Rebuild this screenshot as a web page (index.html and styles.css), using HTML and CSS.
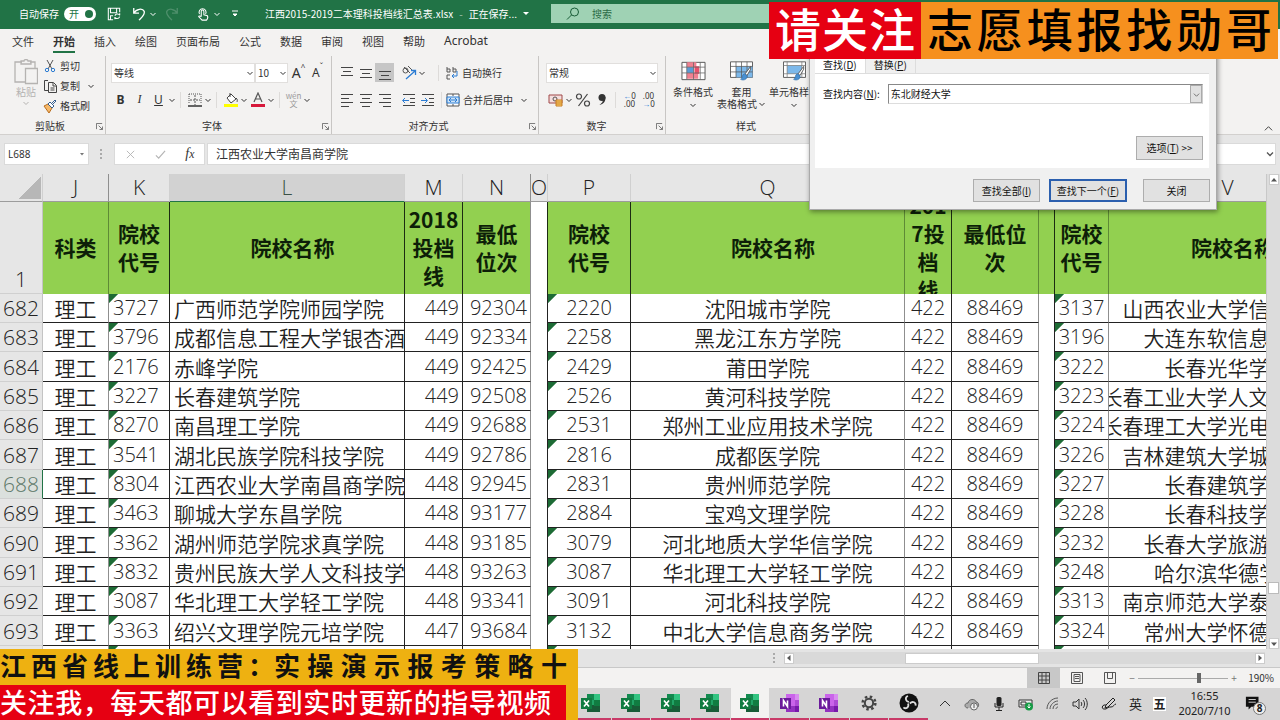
FILE: index.html
```html
<!DOCTYPE html>
<html lang="zh-CN">
<head>
<meta charset="utf-8">
<meta name="viewport" content="width=device-width, initial-scale=1">
<title>江西2015-2019二本理科投档线汇总表.xlsx</title>
<link rel="stylesheet" href="styles.css">
</head>
<body>
<svg class="sprite" aria-hidden="true">
  <symbol id="caret" viewBox="0 0 8 8"><path d="M1.5 3 4 5.5 6.5 3" fill="none" stroke="currentColor"/></symbol>
  <symbol id="launch" viewBox="0 0 8 8"><path d="M.5 7V.5H7M3 3l4 4M7.500 4v3.500H4" fill="none" stroke="currentColor"/></symbol>
  <symbol id="excel" viewBox="0 0 20 20"><path d="M6 1h13v18H6z" fill="#21a366"/><path d="M6 1h7v6H6z" fill="#138a50"/><path d="M13 1h6v6h-6z" fill="#33c481"/><path d="M6 12h13v7H6z" fill="#185c37"/><path d="M13 7h6v6h-6z" fill="#107c41"/><path d="M0 5h11v11H0z" fill="#107c41"/><path d="m3 7.500 5 6M8 7.500l-5 6" stroke="#fff" stroke-width="1.700"/></symbol>
  <symbol id="onenote" viewBox="0 0 20 20"><path d="M6 1h13v18H6z" fill="#ca64ea"/><path d="M15 1h4v6h-4z" fill="#d98cf0"/><path d="M15 7h4v6h-4z" fill="#ae4bd5"/><path d="M15 13h4v6h-4z" fill="#7719aa"/><path d="M6 13h9v6H6z" fill="#9332bf"/><path d="M0 5h11v11H0z" fill="#6b1a9b"/><path d="M3.500 13.500v-6l4 6v-6" fill="none" stroke="#fff" stroke-width="1.600"/></symbol>
  <symbol id="brush" viewBox="0 0 12 18"><path d="M11 1 5 9l2 2 4-7z" fill="#fff" stroke="#555"/><path d="M4 9c-3 1-1 5-4 6 3 2 8 0 7-4z" fill="#4a90d0" stroke="#2d6fae" stroke-width=".7"/></symbol>
</svg>

<div class="app">
  <header class="titlebar">
    <label class="autosave">自动保存 <input type="checkbox" checked><span class="switch">开<i></i></span></label>
    <button class="qa save" aria-label="保存"><svg viewBox="0 0 16 16"><path d="M7 14.500H1.500v-13h13V6M4 1.500v5h7v-5M4 14v-4h3M9 10c1-3 5-2 5.500-.5V7M14.500 11c-1 3-5 2.500-5.500.5V14" fill="none" stroke="#fff" stroke-width="1.200"/></svg></button>
    <button class="qa undo" aria-label="撤销"><svg viewBox="0 0 16 16"><path d="M2 1v6h6M2 7c3-5 10-6 12-2 1 4-3 7-6 10" fill="none" stroke="#fff" stroke-width="1.500"/></svg></button>
    <svg class="car"><use href="#caret"/></svg>
    <button class="qa redo" aria-label="恢复"><svg viewBox="0 0 16 16"><path d="M14 1v6H8M14 7C11 2 4 1 2 5c-1 4 3 7 6 10" fill="none" stroke="#fff" stroke-width="1.500"/></svg></button>
    <button class="qa touch" aria-label="触摸/鼠标模式"><svg viewBox="0 0 16 16"><path d="M4 8a4 4 0 1 1 7 0M6 11V5c0-2 3-2 3 0v4l4 1c1 2 0 4-1 5H7l-4-4c0-1 2-1 3 0" fill="none" stroke="#fff" stroke-width="1.200"/></svg></button>
    <svg class="car"><use href="#caret"/></svg>
    <button class="qa custom" aria-label="自定义"><svg viewBox="0 0 8 8"><path d="M1 1h6M2 4l2 2 2-2z" fill="#fff" stroke="#fff"/></svg></button>
    <h1 class="doc">江西2015-2019二本理科投档线汇总表.xlsx<span>-</span>正在保存...</h1>
    <svg class="tri" viewBox="0 0 8 8"><path d="M1 2h6L4 5z" fill="#fff"/></svg>
    <label class="search"><svg viewBox="0 0 14 14"><circle cx="8.500" cy="5" r="4" fill="none" stroke="#185c37"/><path d="M5.500 8 1 12.500" stroke="#185c37"/></svg><input type="search" placeholder="搜索" aria-label="搜索"></label>
  </header>

  <nav class="tabs">
    <a href="#">文件</a><a href="#" class="on">开始</a><a href="#">插入</a><a href="#">绘图</a><a href="#">页面布局</a><a href="#">公式</a><a href="#">数据</a><a href="#">审阅</a><a href="#">视图</a><a href="#">帮助</a><a href="#" class="latin">Acrobat</a>
  </nav>

  <section class="ribbon">
    <div class="group g-clip">
      <div class="clip">
        <button class="paste"><svg viewBox="0 0 24 26"><path d="M8 3H1v20h10M16 3h5v6M7 5V2h3c0-2 4-2 4 0h3v3zM11.500 9.500h12v15h-12z" fill="none" stroke="#b5b3b1" stroke-width="1.300"/></svg><span>粘贴</span><svg class="car"><use href="#caret"/></svg></button>
        <div class="stack">
          <button class="cmd"><svg viewBox="0 0 14 14"><path d="m4 1 5 9M10 1 5 10" stroke="#555" fill="none"/><circle cx="4" cy="11" r="1.700" fill="none" stroke="#2b7cd3"/><circle cx="10" cy="11" r="1.700" fill="none" stroke="#2b7cd3"/></svg>剪切</button>
          <button class="cmd"><svg viewBox="0 0 14 14"><path d="M5 1.500H1.500v10H5M5.500 3.500h5l3 3v7h-8zM10 4v3h3M7.500 9h4M7.500 11h4" fill="none" stroke="#444"/></svg>复制<svg class="car"><use href="#caret"/></svg></button>
          <button class="cmd"><svg viewBox="0 0 14 14"><path d="m1 7 4-2 4 4-3 5z" fill="#f5b869" stroke="#b86e20"/><path d="m5 5 2-2 4 4-2 2zM9 4l3-3 1 1-3 3" fill="#fff" stroke="#355e8f"/></svg>格式刷</button>
        </div>
      </div>
      <footer><span>剪贴板</span><svg class="launch"><use href="#launch"/></svg></footer>
    </div>

    <div class="group g-font">
      <div class="line">
        <span class="sel w-font"><select aria-label="字体"><option>等线</option></select><svg class="car"><use href="#caret"/></svg></span>
        <span class="sel w-size"><select aria-label="字号"><option>10</option></select><svg class="car"><use href="#caret"/></svg></span>
        <button class="ic big" aria-label="增大字号">A<sup>^</sup></button><button class="ic mid" aria-label="减小字号">A<sup>ˇ</sup></button>
      </div>
      <div class="line">
        <button class="ic"><b>B</b></button><button class="ic"><i>I</i></button><button class="ic"><u>U</u></button><svg class="car"><use href="#caret"/></svg>
        <i class="sep"></i>
        <button class="ic" aria-label="边框"><svg viewBox="0 0 16 16"><path d="M2 2h12v10M2 2v10" fill="none" stroke="#555" stroke-dasharray="1 1"/><path d="M8 3v10M3 8h10" stroke="#555" stroke-dasharray="2 1"/><path d="M1 14h14" stroke="#333" stroke-width="1.500"/></svg></button><svg class="car"><use href="#caret"/></svg>
        <i class="sep"></i>
        <button class="ic" aria-label="填充颜色"><svg viewBox="0 0 16 16"><path d="m4 6 4-4 5 5-5 4zM7 1v4M13 6c2 1 1 4 1 4" fill="#fff" stroke="#444"/><path d="M1 12h14v3H1z" fill="#ff0"/></svg></button><svg class="car"><use href="#caret"/></svg>
        <button class="ic" aria-label="字体颜色"><svg viewBox="0 0 16 16"><path d="m4 10 4-9 4 9M5.500 7h5" fill="none" stroke="#555" stroke-width="1.200"/><path d="M1 12h14v3H1z" fill="#d7193b"/></svg></button><svg class="car"><use href="#caret"/></svg>
        <i class="sep"></i>
        <button class="ic wen">wén<br>文</button><svg class="car"><use href="#caret"/></svg>
      </div>
      <footer><span>字体</span><svg class="launch"><use href="#launch"/></svg></footer>
    </div>

    <div class="group g-align">
      <div class="line">
        <button class="ic" aria-label="顶端对齐"><svg viewBox="0 0 16 16"><path d="M2 2.500h12M4 6.500h8M2 10.500h12" stroke="#444"/></svg></button>
        <button class="ic" aria-label="垂直居中"><svg viewBox="0 0 16 16"><path d="M2 4.500h12M4 8.500h8M2 12.500h12" stroke="#444"/></svg></button>
        <button class="ic on" aria-label="底端对齐"><svg viewBox="0 0 16 16"><path d="M2 6.500h12M4 10.500h8M2 14.500h12" stroke="#444"/></svg></button>
        <i class="sep off"></i>
        <button class="ic" aria-label="方向"><svg viewBox="0 0 16 16"><circle cx="4.500" cy="5.500" r="2.500" fill="none" stroke="#555"/><path d="m3 2 6 6M7 1l4 4" stroke="#555"/><path d="m5 14 9-8M10 5.500h4.500V10" fill="none" stroke="#2b7cd3" stroke-width="1.300"/></svg></button><svg class="car"><use href="#caret"/></svg>
        <i class="sep far"></i>
        <button class="cmd"><svg viewBox="0 0 14 14"><path d="M2 1v5h3V3H2M8 1v5h3V3H8M5 9H2v4h3" fill="none" stroke="#555"/><path d="M12 5v5H7M9 8l-2 2 2 2" fill="none" stroke="#2b7cd3"/></svg>自动换行</button>
      </div>
      <div class="line">
        <button class="ic" aria-label="左对齐"><svg viewBox="0 0 16 16"><path d="M2 2.500h12M2 6.500h8M2 10.500h12M2 14.500h8" stroke="#444"/></svg></button>
        <button class="ic" aria-label="居中"><svg viewBox="0 0 16 16"><path d="M2 2.500h12M4 6.500h8M2 10.500h12M4 14.500h8" stroke="#444"/></svg></button>
        <button class="ic" aria-label="右对齐"><svg viewBox="0 0 16 16"><path d="M2 2.500h12M6 6.500h8M2 10.500h12M6 14.500h8" stroke="#444"/></svg></button>
        <i class="sep off"></i>
        <button class="ic" aria-label="减少缩进"><svg viewBox="0 0 16 16"><path d="M2 2.500h12M9 6.500h5M9 10.500h5M2 13.500h12" stroke="#444"/><path d="M8 8.500H2M4 6 1.500 8.500 4 11" fill="none" stroke="#2b7cd3"/></svg></button>
        <button class="ic" aria-label="增加缩进"><svg viewBox="0 0 16 16"><path d="M2 2.500h12M9 6.500h5M9 10.500h5M2 13.500h12" stroke="#444"/><path d="M1 8.500h6M5 6l2.500 2.500L5 11" fill="none" stroke="#2b7cd3"/></svg></button>
        <i class="sep"></i>
        <button class="cmd"><svg viewBox="0 0 14 14"><path d="M1 1h12v12H1zM7 1v2M7 11v2" fill="#fff" stroke="#555"/><path d="M1 4h12v6H1z" fill="#cfe4f7" stroke="#2b7cd3"/><path d="M3 7h8M5 5 3 7l2 2M9 5l2 2-2 2" fill="none" stroke="#2b7cd3"/></svg>合并后居中<svg class="car"><use href="#caret"/></svg></button>
      </div>
      <footer><span>对齐方式</span><svg class="launch"><use href="#launch"/></svg></footer>
    </div>

    <div class="group g-num">
      <div class="line">
        <span class="sel w-num"><select aria-label="数字格式"><option>常规</option></select><svg class="car"><use href="#caret"/></svg></span>
      </div>
      <div class="line">
        <button class="ic" aria-label="会计数字格式"><svg viewBox="0 0 16 16"><path d="M1 3h13v8H1z" fill="#f4dede" stroke="#a04848"/><circle cx="7" cy="7" r="2" fill="none" stroke="#555"/><path d="M8 8h6v6H8z" fill="#ffd56a" stroke="#c67b22"/><path d="M8 10h6M8 12h6" stroke="#c67b22"/></svg></button><svg class="car"><use href="#caret"/></svg>
        <button class="ic pct" aria-label="百分比"><svg viewBox="0 0 16 16"><circle cx="4" cy="4.500" r="2.500" fill="none" stroke="#444" stroke-width="1.200"/><circle cx="12" cy="11.500" r="2.500" fill="none" stroke="#444" stroke-width="1.200"/><path d="M12.500 2 3.500 14" stroke="#444" stroke-width="1.200"/></svg></button>
        <button class="ic" aria-label="千位分隔"><svg viewBox="0 0 16 16"><circle cx="8" cy="5.500" r="3.500" fill="#333"/><path d="M11.500 5c0 5-2 7-6 8 2-2 4-3 3-6z" fill="#333"/></svg></button>
        <i class="sep"></i>
        <button class="ic dec" aria-label="增加小数位数"><span><em>←</em>0</span><span>.00</span></button>
        <button class="ic dec" aria-label="减少小数位数"><span>.00</span><span><em>→</em>0</span></button>
      </div>
      <footer><span>数字</span><svg class="launch"><use href="#launch"/></svg></footer>
    </div>

    <div class="group g-style">
      <div class="tall">
        <button class="large"><svg viewBox="0 0 26 22"><path d="M1 2h24v18H1z" fill="#fff" stroke="#555"/><path d="M6 2h10v5H6zM6 13h12v6H6z" fill="#f08090"/><path d="M6 7h7v6H6z" fill="#5b9bd5"/><path d="M14 6h5v8h-5z" fill="#e8506a"/><path d="M1 7h24M1 13h24M6 2v18M13 2v18M20 2v18" stroke="#666" stroke-width=".8"/></svg><span>条件格式</span><svg class="car"><use href="#caret"/></svg></button>
        <button class="large"><svg viewBox="0 0 26 24"><path d="M1 2h24v17H1z" fill="#fff" stroke="#555"/><path d="M7 7h18v12H7z" fill="#7cb8ea"/><path d="M1 7h24M1 13h24M7 2v17M13 2v17M19 2v17" stroke="#555" stroke-width=".8"/><use href="#brush" x="11" y="6" width="14" height="18"/></svg><span>套用</span><span class="two">表格格式<svg class="car"><use href="#caret"/></svg></span></button>
        <button class="large"><svg viewBox="0 0 26 24"><path d="M1 2h24v17H1z" fill="#fff" stroke="#555"/><path d="M5 6h16v9H5z" fill="#7cb8ea"/><path d="M1 6h24M5 2v17M21 2v17M1 15h24" stroke="#777" stroke-width=".8"/><use href="#brush" x="11" y="6" width="14" height="18"/></svg><span>单元格样式</span><svg class="car"><use href="#caret"/></svg></button>
      </div>
      <footer><span>样式</span></footer>
    </div>
    <button class="collapse" aria-label="折叠功能区"><svg viewBox="0 0 10 10"><path d="m1 7 4-4 4 4" fill="none" stroke="#333"/></svg></button>
  </section>

  <section class="formula">
    <div class="namebox"><input value="L688" aria-label="名称框"><svg viewBox="0 0 8 8"><path d="M2 3h4L4 5.500z" fill="#777"/></svg></div>
    <i class="dots"></i>
    <div class="fx">
      <button aria-label="取消"><svg viewBox="0 0 12 12"><path d="m2 2 8 8M10 2l-8 8" stroke="#b5b5b5"/></svg></button>
      <button aria-label="输入"><svg viewBox="0 0 12 12"><path d="m1 7 3 3 7-8" fill="none" stroke="#b5b5b5" stroke-width="1.300"/></svg></button>
      <button class="fn" aria-label="插入函数">f<small>x</small></button>
    </div>
    <div class="content"><input value="江西农业大学南昌商学院" aria-label="编辑栏"><svg viewBox="0 0 8 8"><path d="M1 2.500 4 5.500l3-3" fill="none" stroke="#555" stroke-width="1.300"/></svg></div>
  </section>

  <main class="book">
    <div class="sheet">
      <table>
        <colgroup><col class="c0"><col class="cj"><col class="ck"><col class="cl"><col class="cm"><col class="cn"><col class="co"><col class="cp"><col class="cq"><col class="cr"><col class="cs"><col class="ct"><col class="cu"><col class="cv"></colgroup>
        <thead>
          <tr class="letters"><th class="corner"></th><th>J</th><th>K</th><th class="cur">L</th><th>M</th><th>N</th><th>O</th><th>P</th><th>Q</th><th>R</th><th>S</th><th>T</th><th>U</th><th>V</th></tr>
          <tr class="heads"><th>1</th><th><div>科类</div></th><th><div>院校代号</div></th><th><div class="name">院校名称</div></th><th><div>2018投档线</div></th><th><div>最低位次</div></th><th></th><th><div class="inset">院校代号</div></th><th><div class="name">院校名称</div></th><th><div>2017投档线</div></th><th><div>最低位次</div></th><th></th><th><div>院校代号</div></th><th><div class="name">院校名称</div></th></tr>
        </thead>
        <tbody>
          <tr><th>682</th><td>理工</td><td>3727</td><td>广西师范学院师园学院</td><td>449</td><td>92304</td><td></td><td>2220</td><td>沈阳城市学院</td><td>422</td><td>88469</td><td></td><td>3137</td><td><div>山西农业大学信息学院</div></td></tr>
          <tr><th>683</th><td>理工</td><td>3796</td><td>成都信息工程大学银杏酒店</td><td>449</td><td>92334</td><td></td><td>2258</td><td>黑龙江东方学院</td><td>422</td><td>88469</td><td></td><td>3196</td><td><div>大连东软信息学院</div></td></tr>
          <tr><th>684</th><td>理工</td><td>2176</td><td>赤峰学院</td><td>449</td><td>92425</td><td></td><td>2429</td><td>莆田学院</td><td>422</td><td>88469</td><td></td><td>3222</td><td><div>长春光华学院</div></td></tr>
          <tr><th>685</th><td>理工</td><td>3227</td><td>长春建筑学院</td><td>449</td><td>92508</td><td></td><td>2526</td><td>黄河科技学院</td><td>422</td><td>88469</td><td></td><td>3223</td><td><div>长春工业大学人文信息学院</div></td></tr>
          <tr><th>686</th><td>理工</td><td>8270</td><td>南昌理工学院</td><td>449</td><td>92688</td><td></td><td>2531</td><td>郑州工业应用技术学院</td><td>422</td><td>88469</td><td></td><td>3224</td><td><div>长春理工大学光电信息学院</div></td></tr>
          <tr><th>687</th><td>理工</td><td>3541</td><td>湖北民族学院科技学院</td><td>449</td><td>92786</td><td></td><td>2816</td><td>成都医学院</td><td>422</td><td>88469</td><td></td><td>3226</td><td><div>吉林建筑大学城建学院</div></td></tr>
          <tr class="cur"><th>688</th><td>理工</td><td>8304</td><td>江西农业大学南昌商学院</td><td>448</td><td>92945</td><td></td><td>2831</td><td>贵州师范学院</td><td>422</td><td>88469</td><td></td><td>3227</td><td><div>长春建筑学院</div></td></tr>
          <tr><th>689</th><td>理工</td><td>3463</td><td>聊城大学东昌学院</td><td>448</td><td>93177</td><td></td><td>2884</td><td>宝鸡文理学院</td><td>422</td><td>88469</td><td></td><td>3228</td><td><div>长春科技学院</div></td></tr>
          <tr><th>690</th><td>理工</td><td>3362</td><td>湖州师范学院求真学院</td><td>448</td><td>93185</td><td></td><td>3079</td><td>河北地质大学华信学院</td><td>422</td><td>88469</td><td></td><td>3232</td><td><div>长春大学旅游学院</div></td></tr>
          <tr><th>691</th><td>理工</td><td>3832</td><td>贵州民族大学人文科技学院</td><td>448</td><td>93263</td><td></td><td>3087</td><td>华北理工大学轻工学院</td><td>422</td><td>88469</td><td></td><td>3248</td><td><div>哈尔滨华德学院</div></td></tr>
          <tr><th>692</th><td>理工</td><td>3087</td><td>华北理工大学轻工学院</td><td>448</td><td>93341</td><td></td><td>3091</td><td>河北科技学院</td><td>422</td><td>88469</td><td></td><td>3313</td><td><div>南京师范大学泰州学院</div></td></tr>
          <tr><th>693</th><td>理工</td><td>3363</td><td>绍兴文理学院元培学院</td><td>447</td><td>93684</td><td></td><td>3132</td><td>中北大学信息商务学院</td><td>422</td><td>88469</td><td></td><td>3324</td><td><div>常州大学怀德学院</div></td></tr>
          <tr><th></th><td></td><td></td><td></td><td></td><td></td><td></td><td></td><td></td><td></td><td></td><td></td><td></td><td></td></tr>
        </tbody>
      </table>
    </div>
    <div class="vscroll"><button aria-label="向上滚动"><svg viewBox="0 0 8 8"><path d="M1 5.500h6L4 2z" fill="#555"/></svg></button><i></i><button aria-label="向下滚动"><svg viewBox="0 0 8 8"><path d="M1 2.500h6L4 6z" fill="#555"/></svg></button></div>
  </main>

  <div class="hbar">
    <i class="dots"></i>
    <div class="hscroll"><button aria-label="向左滚动"><svg viewBox="0 0 8 8"><path d="M5.500 1v6L2 4z" fill="#555"/></svg></button><i></i><button aria-label="向右滚动"><svg viewBox="0 0 8 8"><path d="M2.500 1v6L6 4z" fill="#555"/></svg></button></div>
  </div>

  <div class="status">
    <button class="view on" aria-label="普通"><svg viewBox="0 0 12 12"><path d="M.5.500h11v11H.5zM.5 4h11M.5 8h11M4 .5v11M8 .5v11" fill="none" stroke="#444"/></svg></button>
    <button class="view" aria-label="页面布局"><svg viewBox="0 0 12 12"><path d="M.5.500h11v11H.5zM3 2.500h6v7H3zM4 4.500h4M4 6.500h4" fill="none" stroke="#555"/></svg></button>
    <button class="view" aria-label="分页预览"><svg viewBox="0 0 12 12"><path d="M.5.500h11v11H.5zM3.500.500v6h5v-6" fill="none" stroke="#555"/></svg></button>
    <div class="zoom"><button aria-label="缩小">−</button><input type="range" min="0" max="100" value="68" aria-label="缩放"><button aria-label="放大">+</button></div>
    <span class="pct-text">190%</span>
  </div>

  <footer class="taskbar">
    <div class="apps">
      <button aria-label="Excel"><svg><use href="#excel"/></svg></button>
      <button aria-label="Excel"><svg><use href="#excel"/></svg></button>
      <button aria-label="Excel"><svg><use href="#excel"/></svg></button>
      <button aria-label="Excel"><svg><use href="#excel"/></svg></button>
      <button class="on" aria-label="Excel"><svg><use href="#excel"/></svg></button>
      <button aria-label="OneNote"><svg><use href="#onenote"/></svg></button>
      <button aria-label="OneNote"><svg><use href="#onenote"/></svg></button>
      <button aria-label="设置"><svg viewBox="-2 -2 24 24"><circle cx="10" cy="10" r="7.640" fill="none" stroke="#444" stroke-width="3" stroke-dasharray="3 3"/><circle cx="10" cy="10" r="5" fill="none" stroke="#444" stroke-width="2.400"/></svg></button>
      <button aria-label="OBS"><svg viewBox="0 0 20 20"><circle cx="10" cy="10" r="9.500" fill="#111"/><g fill="none" stroke="#ddd" stroke-width="1.800"><path d="M10 9C6 8 6 4 9 3"/><path d="M10 9C6 8 6 4 9 3" transform="rotate(120 10 10)"/><path d="M10 9C6 8 6 4 9 3" transform="rotate(240 10 10)"/></g></svg></button>
    </div>
    <div class="tray">
      <svg viewBox="0 0 16 16"><path d="m3 10 5-5 5 5" fill="none" stroke="#333"/></svg>
      <svg viewBox="0 0 16 16"><path d="M4 12c-4 0-4-5 0-5 1-5 8-4 8-1 3 0 3 4 2 5" fill="#aaa" stroke="#666"/><circle cx="10" cy="10.500" r="3.500" fill="#eee" stroke="#666"/><path d="M10 8v4" stroke="#555"/></svg>
      <svg viewBox="0 0 16 16"><rect x="5.500" y="1" width="5" height="9" rx="1.500" fill="#222"/><path d="M4 7v4h8V7M8 11v4M5 14.500h6" fill="none" stroke="#222"/></svg>
      <svg viewBox="0 0 16 16"><path d="M1 4h13v7H1zM3 6h5v3H3z" fill="#eee" stroke="#333"/><circle cx="11" cy="10.500" r="4" fill="#169b45"/><path d="M11 8v4M9.500 10.500 11 12l1.500-1.500" fill="none" stroke="#fff"/></svg>
      <svg viewBox="0 0 16 16"><path d="M2 13C2 7 7 2 13 2M5 13c0-4 4-8 8-8M8 13c0-3 2-5 5-5M11 13c0-1 1-2 2-2" fill="none" stroke="#555"/></svg>
      <svg viewBox="0 0 16 16"><path d="M1 6h3l3-3v10l-3-3H1zM9 6c1 1 1 3 0 4M11 4c2 2 2 6 0 8M13 2c3 3 3 9 0 12" fill="none" stroke="#333"/></svg>
      <svg class="pen" viewBox="0 0 16 16"><path d="m5 9 7-7 2 2-7 7-3 1zM5 9c-4-1-5 4-2 4 3 1 4-3 7-2 3 0 3-3 5-3" fill="none" stroke="#222"/></svg>
      <span class="ime">英</span>
      <span class="ime box">五</span>
    </div>
    <time class="clock">16:55<br>2020/7/10</time>
    <button class="notice" aria-label="通知"><svg viewBox="0 0 20 20"><path d="M1 2h14v11H7l-3 3v-3H1z" fill="#111"/><path d="M4 5h8M4 8h8" stroke="#ddd"/></svg><b>8</b></button>
  </footer>
</div>

<form class="find" onsubmit="return false">
  <div class="find-tabs"><button type="button" class="on">查找(<u>D</u>)</button><button type="button">替换(<u>P</u>)</button></div>
  <div class="panel">
    <div class="field"><label for="what">查找内容(<u>N</u>):</label><span class="combo"><input id="what" value="东北财经大学"><button type="button" aria-label="展开"><svg viewBox="0 0 8 8"><path d="M1 3 4 6l3-3" fill="none" stroke="#666"/></svg></button></span></div>
    <button type="button" class="btn opt">选项(<u>T</u>) &gt;&gt;</button>
  </div>
  <div class="actions"><button type="button" class="btn">查找全部(<u>I</u>)</button><button class="btn main">查找下一个(<u>F</u>)</button><button type="button" class="btn close">关闭</button></div>
</form>

<div class="promo top"><span class="red">请关注</span><span class="orange">志愿填报找勋哥</span></div>
<div class="promo bottom"><p class="yellow"><span>江西省线上训练营：</span><span>实操演示报考策略十</span></p><p class="red">关注我，每天都可以看到实时更新的指导视频</p></div>
</body>
</html>
```

FILE: styles.css
```css
* { box-sizing: border-box; }
body { margin: 0; background: #e6e6e6; color: #333; font: 10px/16px "Noto Sans CJK SC", sans-serif; position: relative; overflow: hidden; }
button, input, select { font: inherit; color: inherit; border: 0; padding: 0; margin: 0; background: none; border-radius: 0; }
svg { display: block; flex: none; }
i, em { font-style: normal; }
.sprite { position: absolute; width: 0; height: 0; }
.app { display: flex; flex-direction: column; height: 100vh; }
.car { width: 8px; height: 8px; }

/* title bar */
.titlebar { flex: none; display: flex; align-items: center; height: 29px; padding: 0 0 2px 19px; background: #217346; color: #fff; }
.autosave { display: flex; align-items: center; gap: 5px; }
.autosave input { position: absolute; opacity: 0; }
.switch { display: flex; align-items: center; justify-content: space-between; width: 32px; height: 14px; padding: 0 3px 0 5px; border-radius: 7px; background: #fff; color: #217346; }
.switch i { width: 8px; height: 8px; border-radius: 50%; background: #217346; }
.qa svg { width: 14px; height: 14px; }
.save { margin-left: 11px; }
.undo { margin: 0 3px 0 11px; }
.redo { margin-left: 8px; opacity: .2; }
.touch { margin: 0 3px 0 17px; }
.custom { margin-left: 10px; }
.custom svg { width: 8px; height: 8px; }
.doc { margin: 0 5px 0 26px; font-size: 10px; font-weight: 400; white-space: nowrap; }
.doc span { margin: 0 6px; opacity: .6; }
.tri { width: 8px; height: 8px; }
.search { display: flex; align-items: center; gap: 12px; width: 340px; height: 19px; margin-left: 21px; padding-left: 15px; background: #9fd2b4; }
.search svg { width: 14px; height: 14px; }
.search input { flex: 1; min-width: 0; appearance: none; }
.search input::placeholder { color: #2c6b47; opacity: 1; }

/* ribbon */
.tabs { flex: none; display: flex; gap: 19px; height: 27px; padding: 4px 12px 0; background: #f3f2f1; font-size: 11px; }
.tabs a { height: 20px; color: #333; text-decoration: none; }
.tabs .on { font-weight: 700; border-bottom: 2px solid #217346; }
.latin { font-family: "Noto Sans", sans-serif; font-size: 12px; }
.ribbon { flex: none; display: flex; height: 79px; background: #f3f2f1; border-bottom: 1px solid #d2d0ce; }
.group { display: flex; flex-direction: column; padding: 7px 2px 0 5px; border-right: 1px solid #c8c6c4; }
.group footer { position: relative; margin-top: auto; text-align: center; }
.launch { position: absolute; right: 0; top: 5px; width: 7px; height: 7px; color: #666; }
.g-clip { width: 106px; }
.g-clip footer { padding-right: 8px; }
.g-font { width: 226px; }
.g-font footer, .g-align footer, .g-num footer { padding-right: 16px; }
.g-align { width: 207px; }
.g-num { width: 127px; padding-left: 7px; }
.g-style { width: 165px; border: 0; padding: 4px 0 0 3px; }
.line { display: flex; align-items: center; height: 19px; margin-bottom: 8px; }
.ic { flex: none; display: flex; align-items: center; justify-content: center; width: 19px; height: 19px; font: 12px/19px "Noto Sans", sans-serif; }
.ic svg { width: 16px; height: 16px; }
.ic.on { background: #c6c6c6; }
.ic i { font: italic 12px "Liberation Serif", serif; }
.ic sup { font-size: 8px; line-height: 8px; align-self: flex-start; }
.big { font-size: 14px; }
.sep { width: 1px; height: 16px; margin: 0 4px; background: #dddbd9; }
.sep.off { background: none; margin: 0 2px; }
.sep.far { margin: 0 6px 0 12px; }
.wen { flex-direction: column; font: 8px/8px "Noto Sans CJK SC", sans-serif; color: #999; display: block; }
.dec { flex-direction: column; font: 8px/8px "Noto Sans", sans-serif; }
.dec em { color: #2b7cd3; }
.sel { display: grid; align-items: center; height: 20px; background: #fff; border: 1px solid #e1dfdd; }
.sel select { grid-area: 1/1; width: 100%; height: 18px; appearance: none; padding-left: 2px; }
.sel svg { grid-area: 1/1; justify-self: end; pointer-events: none; }
.w-font { width: 144px; }
.w-size { width: 33px; margin-right: 1px; }
.w-num { width: 112px; }
.cmd { display: flex; align-items: center; gap: 3px; height: 20px; white-space: nowrap; }
.cmd svg:first-child { width: 14px; height: 14px; }
.cmd .car { margin-left: 4px; }
.clip { display: flex; gap: 4px; padding-left: 8px; margin-top: -7px; }
.paste { display: flex; flex-direction: column; align-items: center; width: 26px; padding-top: 3px; color: #b5b3b1; }
.paste svg:first-child { width: 24px; height: 26px; }
.paste span { line-height: 14px; }
.tall { display: flex; }
.large { display: flex; flex-direction: column; align-items: center; flex: none; min-width: 48px; line-height: 12px; white-space: nowrap; }
.large > svg:first-child { width: 25px; height: 22px; margin-bottom: 4px; }
.large > .car { margin-top: 3px; }
.large:last-child { margin-left: 3px; }
.two { display: flex; align-items: center; gap: 1px; }
.g-style footer { padding-right: 8px; }
.collapse { margin: auto 7px 0 auto; padding-bottom: 1px; }
.collapse svg { width: 9px; height: 9px; }

/* formula bar */
.formula { flex: none; display: flex; align-items: center; height: 39px; padding: 0 4px 1px; background: #e6e6e6; }
.namebox, .fx, .content { display: flex; align-items: center; height: 22px; background: #fff; border: 1px solid #dadada; }
.namebox { width: 85px; padding: 0 2px 0 3px; font-family: "Noto Sans", sans-serif; }
.namebox input, .content input { flex: 1; min-width: 0; }
.namebox svg, .content svg { width: 8px; height: 8px; }
.dots { width: 2px; height: 10px; margin: 0 12px 0 11px; border-left: 2px dotted #aaa; }
.fx { width: 91px; justify-content: space-around; }
.fx svg { width: 11px; height: 11px; }
.fn { font: italic 14px "Liberation Serif", serif; }
.content { flex: 1; margin-left: 2px; padding: 0 1px 0 8px; font-size: 12px; }

/* sheet */
.book { flex: 1; min-height: 0; display: flex; }
.sheet { flex: 1; min-width: 0; overflow: hidden; background: #fff; }
table { table-layout: fixed; width: 1347px; border-collapse: separate; border-spacing: 0; font-weight: 350; font-size: 21px; line-height: 28px; color: #222; white-space: nowrap; }
.c0 { width: 43px; } .cj { width: 66px; } .ck { width: 61px; } .cl { width: 235px; } .cm { width: 58px; } .cn { width: 68px; } .co { width: 17px; } .cp { width: 83px; } .cq { width: 274px; } .cr { width: 47px; } .cs { width: 87px; } .ct { width: 16px; } .cu { width: 54px; } .cv { width: 238px; }
th, td { padding: 0; overflow: hidden; text-align: center; }
.letters th { height: 28px; border-right: 1px solid #d0d0d0; border-bottom: 1px solid #9c9c9c; background: #e6e6e6; font: 300 21px/27px "Open Sans", "Noto Sans", sans-serif; }
.letters .cur { background: #d2d2d2; border-bottom-color: #217346; color: #3b5145; }
.letters .corner { background: linear-gradient(135deg, #e6e6e6 50%, #b7b7b7 50%) 19px 3px / 22px 22px no-repeat #e6e6e6; }
.heads th { height: 92px; background: #92d050; border-right: 1px solid #1c2b12; color: #0d1f08; }
.heads div { display: flex; align-items: center; justify-content: center; height: 91px; padding: 0 3px 2px; overflow: hidden; white-space: normal; word-break: break-all; font-weight: 700; }
.heads .name { padding-left: 14px; }
.heads .inset { padding-left: 12px; padding-right: 12px; }
.heads th:first-child, tbody th { background: #e6e6e6; border-right: 1px solid #c4c4c4; border-bottom: 1px solid #d0d0d0; font: 300 21px/28px "Open Sans", "Noto Sans", sans-serif; color: #222; }
.heads th:first-child { vertical-align: bottom; }
.heads th:nth-child(7) { background: #fff; }
tbody td, tbody th { height: 29px; }
tbody tr:nth-child(3n) > * { height: 30px; }
tbody td { border-right: 1px solid #222; border-bottom: 1px solid #222; }
td:nth-child(3), td:nth-child(8), td:nth-child(13) { background: linear-gradient(135deg, #1d6b35 6px, transparent 7px) no-repeat; }
td:nth-child(3), td:nth-child(5), td:nth-child(6), td:nth-child(8), td:nth-child(10), td:nth-child(11), td:nth-child(13) { font: 300 20px/28px "Open Sans", "Noto Sans", sans-serif; }
td:nth-child(3), td:nth-child(4) { text-align: left; padding-left: 4px; }
td:nth-child(5), td:nth-child(6) { text-align: right; padding-right: 3px; }
td:nth-child(7), td:nth-child(12) { border-bottom: 0; }
tr > :nth-child(2), tr > :nth-child(6), tr > :nth-child(9), tr > :nth-child(11), tr > :nth-child(13) { border-right-color: #8f8f8f; }
.heads th:nth-child(2), .heads th:nth-child(9), .heads th:nth-child(11), .heads th:nth-child(13) { border-right-color: #5e8a36; }
td div { display: flex; justify-content: center; overflow: hidden; }
tbody .cur th { background: #dbe0dd; color: #5f7a6b; border-right-color: #217346; }
.vscroll { flex: none; display: flex; flex-direction: column; justify-content: space-between; align-items: center; width: 14px; background: #dcdcdc; border-left: 1px solid #c8c8c8; }
.vscroll button, .hscroll button { width: 10px; height: 11px; background: #fff; border: 1px solid #ccc; }
.vscroll svg, .hscroll svg { width: 8px; height: 8px; }
.vscroll i { width: 11px; height: 12px; margin-top: auto; margin-bottom: 44px; background: #fff; border: 1px solid #bbb; }

/* bottom bars */
.hbar { flex: none; display: flex; align-items: center; justify-content: flex-end; height: 19px; padding-right: 15px; background: #e4e4e4; border-bottom: 1px solid #c8c8c8; }
.hbar .dots { margin-right: 9px; }
.hscroll { display: flex; align-items: center; width: 38%; height: 12px; background: #d9d9d9; }
.hscroll i { width: 28%; height: 11px; margin-left: 23%; margin-right: auto; background: #fff; border: 1px solid #ccc; }
.status { flex: none; display: flex; align-items: center; justify-content: flex-end; height: 20px; padding-right: 6px; background: #f3f2f1; }
.view { display: grid; place-items: center; width: 33px; height: 20px; }
.view.on { background: #c8c8c8; }
.view svg { width: 12px; height: 12px; }
.zoom { display: flex; align-items: center; gap: 2px; margin: 0 10px 0 2px; }
.zoom button { width: 8px; color: #777; }
.zoom input { width: 90px; height: 12px; appearance: none; background: linear-gradient(#aaa, #aaa) center / 100% 1px no-repeat; }
.zoom input::-webkit-slider-thumb { appearance: none; width: 4px; height: 10px; background: #666; }
.taskbar { flex: none; display: flex; justify-content: flex-end; height: 32px; background: #d6d5d5; color: #222; }
.apps { display: flex; width: 357px; }
.apps button { flex: 1; display: grid; place-items: center; margin-right: 1px; border-bottom: 2px solid #c93a68; }
.apps .on { background: #f3f2f1; }
.apps svg { width: 20px; height: 20px; }
.tray { display: flex; align-items: center; gap: 11px; margin-left: 8px; }
.tray svg { width: 16px; height: 16px; }
.tray .pen { margin: 0 1px 0 2px; }
.ime { width: 13px; font-size: 13px; line-height: 14px; text-align: center; }
.box { background: #fff; font-size: 12px; font-weight: 700; }
.clock { width: 77px; text-align: center; font: 11px/15px "Noto Sans", sans-serif; }
.notice { position: relative; width: 20px; margin: 0 15px 0 2px; }
.notice svg { width: 18px; height: 18px; }
.notice b { position: absolute; left: 8px; top: 14px; width: 13px; height: 13px; border: 1px solid #777; border-radius: 50%; background: #eee; font: 700 10px/11px "Noto Sans", sans-serif; }

/* find dialog */
.find { position: absolute; left: 809px; top: 30px; width: 408px; padding: 26px 7px 7px 5px; background: #f0f0f0; border: 1px solid #aaa; box-shadow: 1px 2px 5px #0006; color: #111; }
.find-tabs { display: flex; }
.find-tabs button { height: 16px; padding: 0 8px; line-height: 14px; border-right: 1px solid #ddd; }
.find-tabs .on { background: #fff; }
.panel { display: flex; flex-direction: column; height: 95px; padding: 10px 6px 8px 8px; background: #fff; border-top: 1px solid #ddd; }
.field { display: flex; align-items: center; gap: 8px; }
.combo { flex: 1; display: flex; height: 20px; border: 1px solid #999; border-color: #888 #ccc #ddd #888; }
.combo input { flex: 1; min-width: 0; padding-left: 2px; }
.combo button { display: grid; place-items: center; width: 12px; background: #e1e1e1; border: 1px solid #aaa; }
.combo svg { width: 7px; height: 7px; }
.btn { height: 23px; width: 67px; background: #e1e1e1; border: 1px solid #adadad; }
.opt { align-self: flex-end; margin-top: auto; height: 24px; }
.actions { display: flex; justify-content: flex-end; gap: 9px; padding-top: 11px; }
.main { width: 78px; border: 2px solid #2b5fae; }
.close { margin-left: 7px; margin-right: -1px; }

/* promotional strips laid over the desktop */
.promo { position: absolute; font-weight: 500; white-space: nowrap; }
.promo p { margin: 0; }
.promo .red { background: #e60012; color: #fff; }
.top { top: 2px; right: 2px; display: flex; font-size: 46px; line-height: 50px; }
.top span { height: 57px; padding: 0 6px; text-align: justify; text-align-last: justify; }
.top .red { width: 152px; }
.top .orange { width: 357px; background: #f6901e; color: #000; }
.bottom { left: 0; bottom: 0; width: 578px; background: #eeb111; }
.yellow { display: flex; height: 36px; color: #111; font: 700 26px/31px "Noto Sans CJK SC", sans-serif; }
.yellow span { width: 274px; text-align: justify; text-align-last: justify; }
.yellow span + span { width: 293px; }
.bottom .red { width: 566px; height: 35px; padding-right: 15px; font-size: 27px; line-height: 34px; text-align: justify; text-align-last: justify; }
```
